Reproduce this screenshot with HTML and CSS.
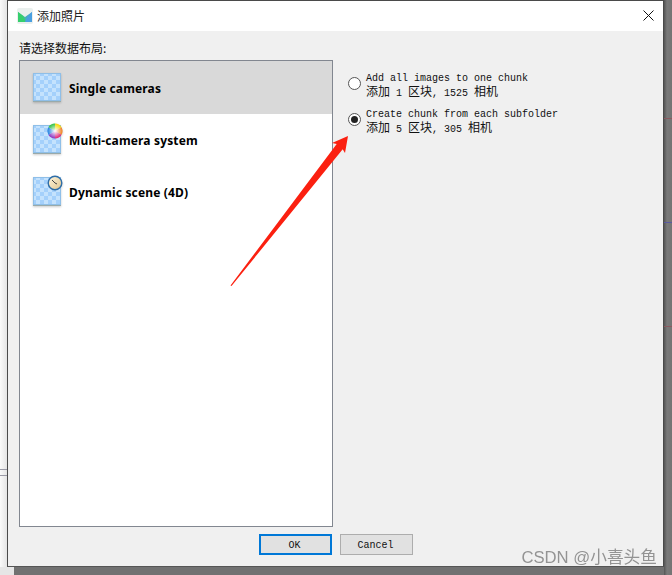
FILE: index.html
```html
<!DOCTYPE html>
<html lang="zh">
<head>
<meta charset="utf-8">
<title>添加照片</title>
<link rel="stylesheet" href="styles.css">
</head>
<body>
<svg class="defs" width="0" height="0" aria-hidden="true">
  <defs>
    <pattern id="check" width="8" height="8" patternUnits="userSpaceOnUse">
      <rect width="8" height="8" fill="#c4e2fd"/>
      <rect width="4" height="4" fill="#a4d0fb"/>
      <rect x="4" y="4" width="4" height="4" fill="#a4d0fb"/>
    </pattern>
    <radialGradient id="white-core">
      <stop offset="0" stop-color="#fff"/>
      <stop offset="0.45" stop-color="#fff" stop-opacity=".55"/>
      <stop offset="1" stop-color="#fff" stop-opacity="0"/>
    </radialGradient>
    <linearGradient id="clockface" x1="0" y1="0" x2="1" y2="1">
      <stop offset="0" stop-color="#fff7e0"/>
      <stop offset="1" stop-color="#e0c48c"/>
    </linearGradient>
    <linearGradient id="logo-g" x1="0" y1="0" x2="1" y2="0">
      <stop offset="0" stop-color="#3ad070"/>
      <stop offset="1" stop-color="#4a9fe0"/>
    </linearGradient>
  </defs>
</svg>
<div class="backdrop">
  <div class="edge-lines"></div>
  <div class="side-line red-a"></div>
  <div class="side-line blue"></div>
  <div class="side-line red-b"></div>
  <div class="dialog">
    <header class="titlebar">
      <svg class="logo" width="16" height="16" viewBox="0 0 16 16">
        <rect width="16" height="16" rx="2" fill="#eaf0ee"/>
        <path d="M1 4 L8 9 L15 4 V14 H1 Z" fill="url(#logo-g)"/>
        <path d="M1 4 L6 8 L9 14 H1 Z" fill="#36cf6e"/>
        <path d="M15 4 V14 H8 L10 9 Z" fill="#4a9fe0"/>
      </svg>
      <span class="title">添加照片</span>
      <svg class="close" width="11" height="11" viewBox="0 0 11 11">
        <path d="M.5 .5 L10.5 10.5 M10.5 .5 L.5 10.5" stroke="#111" stroke-width="1" fill="none"/>
      </svg>
    </header>
    <main class="content">
      <div class="prompt">请选择数据布局:</div>
      <div class="columns">
        <ul class="list">
          <li class="row selected">
            <svg class="thumb" width="30" height="30" viewBox="0 0 30 30">
              <rect x="1.5" y="1.5" width="27" height="27" fill="url(#check)" stroke="#8fbfe8"/>
              <path d="M1 29.500 H29" stroke="#9aa" stroke-width="1"/>
            </svg>
            <span class="row-label">Single cameras</span>
          </li>
          <li class="row">
            <svg class="thumb" width="30" height="30" viewBox="0 0 30 30">
              <rect x="1.500" y="1.500" width="27" height="27" fill="url(#check)" stroke="#8fbfe8"/>
              <path d="M1 29.500 H29" stroke="#9aa" stroke-width="1"/>
              <g transform="translate(23 7)">
                <path d="M0 0 L0 -7.500 A7.500 7.500 0 0 1 6.500 -3.750 Z" fill="#f5d800"/>
                <path d="M0 0 L6.500 -3.750 A7.500 7.500 0 0 1 6.500 3.750 Z" fill="#f08020"/>
                <path d="M0 0 L6.500 3.750 A7.500 7.500 0 0 1 0 7.500 Z" fill="#e02070"/>
                <path d="M0 0 L0 7.500 A7.500 7.500 0 0 1 -6.500 3.750 Z" fill="#8a30c0"/>
                <path d="M0 0 L-6.500 3.750 A7.500 7.500 0 0 1 -6.500 -3.750 Z" fill="#2080e0"/>
                <path d="M0 0 L-6.500 -3.750 A7.500 7.500 0 0 1 0 -7.500 Z" fill="#30c040"/>
                <circle r="7.500" fill="url(#white-core)"/>
              </g>
            </svg>
            <span class="row-label">Multi-camera system</span>
          </li>
          <li class="row">
            <svg class="thumb" width="30" height="30" viewBox="0 0 30 30">
              <rect x="1.500" y="1.500" width="27" height="27" fill="url(#check)" stroke="#8fbfe8"/>
              <path d="M1 29.500 H29" stroke="#9aa" stroke-width="1"/>
              <circle cx="23" cy="7" r="6.800" fill="url(#clockface)" stroke="#2f6ea8" stroke-width="1.400"/>
              <path d="M23 7 L20 4 M23 7 L25 8" stroke="#444" stroke-width="1" fill="none"/>
            </svg>
            <span class="row-label">Dynamic scene (4D)</span>
          </li>
        </ul>
        <div class="options">
          <label class="option">
            <span class="radio"></span>
            <span class="option-text">
              <span class="line en">Add all images to one chunk</span>
              <span class="line"><span class="zh">添加</span> 1 <span class="zh">区块</span>, 1525 <span class="zh">相机</span></span>
            </span>
          </label>
          <label class="option">
            <span class="radio checked"></span>
            <span class="option-text">
              <span class="line en">Create chunk from each subfolder</span>
              <span class="line"><span class="zh">添加</span> 5 <span class="zh">区块</span>, 305 <span class="zh">相机</span></span>
            </span>
          </label>
        </div>
      </div>
      <footer class="buttons">
        <button class="btn primary">OK</button>
        <button class="btn">Cancel</button>
      </footer>
    </main>
  </div>
  <svg class="arrow" width="130" height="160" viewBox="0 0 130 160">
    <path d="M.5 158.500 L1.500 159 L112.700 22.300 L115 26 L118 9 L102 16 L106.700 17 Z" fill="#fb2010"/>
  </svg>
  <div class="watermark">CSDN @小喜头鱼</div>
</div>
</body>
</html>
```

FILE: styles.css
```css
* { box-sizing: border-box; }
html, body { margin: 0; padding: 0; }
body { width: 672px; height: 575px; overflow: hidden; font-family: "Liberation Mono", "Noto Sans CJK SC", monospace; }
.defs { position: absolute; }
.backdrop {
  position: relative;
  width: 672px;
  height: 575px;
  padding: 0 8px 8px 7px;
  background: linear-gradient(#e6e6e6, #e6e6e6) left bottom / 14px 8px no-repeat, linear-gradient(90deg, #fafafa, #e4e4e4) left top / 7px 100% no-repeat, linear-gradient(90deg, #555, #7a7a7a 3px, #747474) right top / 8px 100% no-repeat, #717171;
}
.edge-lines {
  position: absolute;
  left: 0; top: 469px;
  width: 7px; height: 7px;
  border-top: 1px solid #9a9aa6;
  border-bottom: 1px solid #9a9aa6;
}
.side-line { position: absolute; left: 664px; width: 8px; height: 1px; }
.red-a { top: 118px; background: #8a5a60; }
.blue { top: 222px; background: #5a5aa0; }
.red-b { top: 326px; background: #8a5a60; }
.dialog {
  height: 567px;
  display: flex;
  flex-direction: column;
  background: #f0f0f0;
  border: 1px solid #4a4a4a;
  border-bottom-color: #555;
}
.titlebar {
  height: 30px;
  flex: none;
  display: flex;
  align-items: center;
  padding: 0 9px 2px 9px;
  background: #fff;
}
.logo { flex: none; margin-top: 1px; }
.title { margin-left: 4px; font: 12px "Noto Sans CJK SC", sans-serif; color: #222; }
.close { margin-left: auto; }
.content { flex: 1; display: flex; flex-direction: column; padding: 10px 0 0 11px; min-height: 0; }
.prompt { height: 19px; font: 12px/14px "Noto Sans CJK SC", sans-serif; color: #111; }
.columns { display: flex; height: 467px; flex: none; }
.list {
  margin: 0;
  padding: 0;
  list-style: none;
  width: 314px;
  flex: none;
  background: #fff;
  border: 1px solid #828790;
}
.row { height: 52px; display: flex; align-items: center; padding-left: 12px; }
.row.selected { height: 53px; background: #d9d9d9; }
.thumb { flex: none; overflow: visible; margin-bottom: 2px; filter: drop-shadow(0 1px 1px rgba(0,0,0,.2)); }
.row-label { margin-left: 7px; padding-top: 1px; font: bold 12px "Noto Sans", sans-serif; letter-spacing: .15px; color: #000; }
.options { display: flex; flex-direction: column; gap: 8px; padding: 10px 0 0 15px; }
.option { display: flex; align-items: center; gap: 5px; color: #111; }
.radio {
  flex: none;
  width: 13px; height: 13px;
  margin-bottom: 1px;
  border: 1px solid #555;
  border-radius: 50%;
  background: #fff;
  display: grid;
  place-items: center;
}
.radio.checked::after { content: ""; width: 7px; height: 7px; border-radius: 50%; background: #222; }
.option-text { display: flex; flex-direction: column; }
.line { display: block; height: 14px; font-size: 10px; line-height: 14px; white-space: pre; }
.line.en { padding-top: 3px; line-height: 11px; }
.zh { font: 12px/14px "Noto Sans CJK SC", sans-serif; }
.buttons { display: flex; justify-content: center; gap: 8px; padding: 7px 12px 0 0; margin-left: 1px; }
.btn {
  width: 73px;
  height: 21px;
  padding: 1px 1px 0 0;
  background: #e1e1e1;
  border: 1px solid #adadad;
  border-radius: 0;
  font: 10px "Liberation Mono", monospace;
  color: #111;
}
.btn.primary { border: 2px solid #0078d7; }
.arrow { position: absolute; left: 230px; top: 127px; }
.watermark {
  position: absolute;
  right: 15px;
  top: 548px;
  font: 16.700px/20px "Liberation Sans", "Noto Sans CJK SC", sans-serif;
  color: #8a8a8a;
  opacity: .9;
}
```
